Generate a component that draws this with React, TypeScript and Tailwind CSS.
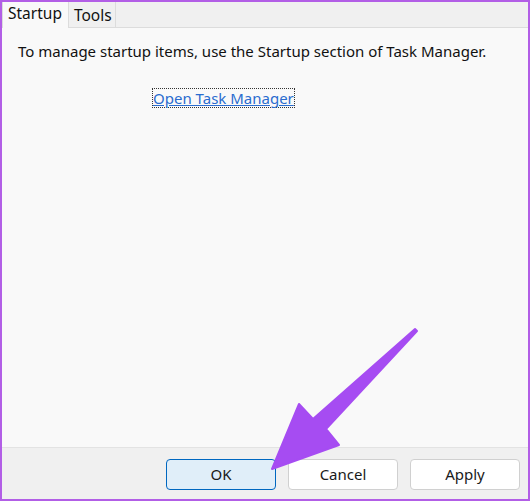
import React from "react";

const font = { fontFamily: '"Noto Sans", "Open Sans", "Liberation Sans", sans-serif' };

function DialogButton({ label, primary = false }: { label: string; primary?: boolean }) {
  return (
    <button
      className={`w-[110px] h-[31px] rounded-[4px] border text-[15px] text-[#1a1a1a] ${
        primary ? "bg-[#e0eef9] border-[#0067c0]" : "bg-white border-[#d0d0d0]"
      }`}
    >
      {label}
    </button>
  );
}

export default function App() {
  return (
    <div
      className="relative w-[530px] h-[501px] border-2 border-[#b25ee6] bg-[#f0f0f0] flex flex-col overflow-hidden"
      style={font}
    >
      {/* Tabs */}
      <div className="flex h-[26px] items-end bg-[#f0f0f0] border-b border-[#dcdcdc]">
        <div className="h-[27px] -mb-px pl-[5px] pr-[6px] bg-[#f9f9f9] border-r border-l border-[#dcdcdc] text-[15.5px] leading-[25px] text-[#111]">
          Startup
        </div>
        <div className="h-[26px] pl-[5px] pr-[3px] border-r border-[#dcdcdc] text-[15.5px] leading-[28px] text-[#111]">
          Tools
        </div>
      </div>

      {/* Panel */}
      <div className="flex-1 bg-[#f9f9f9] border-b border-[#e3e3e3] px-[16px] pt-[12px]">
        <p className="text-[15px] text-[#111] leading-[22px] whitespace-nowrap">
          To manage startup items, use the Startup section of Task Manager.
        </p>
        <div className="mt-[24px] pl-[134px]">
          <a className="inline-block border border-dotted border-[#333] text-[15px] leading-[18px] text-[#2a6ccf] underline">
            Open Task Manager
          </a>
        </div>
      </div>

      {/* Buttons */}
      <div className="h-[51px] flex justify-end items-start gap-[12px] pt-[11px] pr-[8px]">
        <DialogButton label="OK" primary />
        <DialogButton label="Cancel" />
        <DialogButton label="Apply" />
      </div>

      {/* Annotation arrow */}
      <svg className="absolute left-0 top-0 pointer-events-none" width="530" height="501" viewBox="0 0 530 501">
        <path
          d="M415 329 L324 427 L337 443 L270 467 L297 402 L311 417 L413 327 Z"
          fill="#a64cf2"
          stroke="#a64cf2"
          strokeWidth="2"
          strokeLinejoin="round"
        />
      </svg>
    </div>
  );
}
